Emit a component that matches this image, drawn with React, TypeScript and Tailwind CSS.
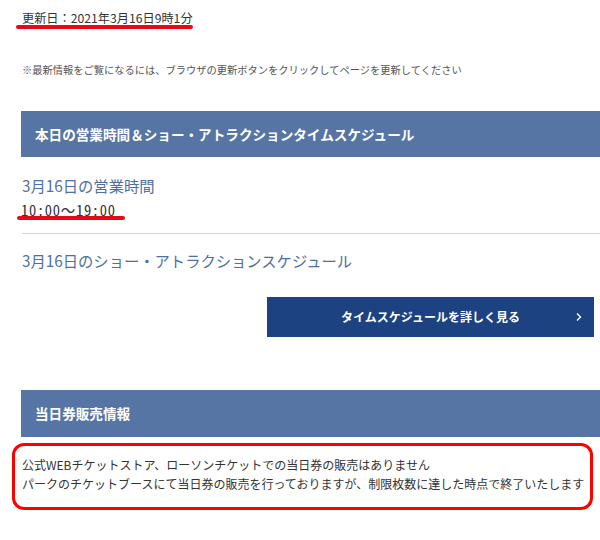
export default function App() {
  return (
    <div className="min-h-[540px] w-[600px] overflow-hidden bg-white pt-[9px] pl-[21px] font-['Noto_Sans_CJK_JP','Noto_Sans',sans-serif] text-[#333]">
      {/* Updated date */}
      <div className="relative ml-[1px] w-fit text-[12.2px] leading-[18px]">
        更新日：2021年3月16日9時1分
        <span className="absolute -left-[6px] top-[16px] h-[4px] w-[177px] rounded-full bg-[#e8081b]" />
      </div>

      <p className="mt-[35px] pl-[1px] text-[10.25px] leading-[16px] text-[#555]">
        ※最新情報をご覧になるには、ブラウザの更新ボタンをクリックしてページを更新してください
      </p>

      {/* Today's hours */}
      <div className="mt-[33px] flex h-[46px] items-center bg-[#5675a5] pl-[14px]">
        <h2 className="text-[13.6px] font-bold text-white">
          本日の営業時間＆ショー・アトラクションタイムスケジュール
        </h2>
      </div>

      <h3 className="mt-[17px] pl-[1px] text-[15.3px] leading-[22px] text-[#4f6fa3]">
        3月16日の営業時間
      </h3>
      <div className="relative mt-[4px] w-fit font-['Noto_Sans_Mono_CJK_JP','DejaVu_Sans_Mono',monospace] text-[14.5px] leading-[20px] tracking-[0.7px] text-[#333]">
        10:00〜19:00
        <span className="absolute -left-[4px] top-[16px] h-[4px] w-[108px] rounded-full bg-[#e8081b]" />
      </div>

      <div className="mt-[13px] ml-[1px] border-t border-[#d4d4d4]" />

      <h3 className="mt-[15px] pl-[1px] text-[15.3px] leading-[22px] text-[#4f6fa3]">
        3月16日のショー・アトラクションスケジュール
      </h3>

      <div className="mt-[26px] flex justify-end pr-[6px]">
        <button
          type="button"
          className="relative flex h-[40px] w-[327px] items-center justify-center bg-[#1c4282] text-[12px] font-bold text-white"
        >
          タイムスケジュールを詳しく見る
          <svg
            className="absolute right-[12px] top-1/2 -translate-y-1/2"
            width="6"
            height="10"
            viewBox="0 0 6 10"
            fill="none"
          >
            <polyline
              points="1,1.5 4.5,5 1,8.5"
              stroke="white"
              strokeWidth="1.4"
            />
          </svg>
        </button>
      </div>

      {/* Same-day tickets */}
      <div className="mt-[53px] flex h-[47px] items-center bg-[#5675a5] pl-[14px]">
        <h2 className="text-[13.6px] font-bold text-white">当日券販売情報</h2>
      </div>

      <div className="mt-[6px] -ml-[9px] w-[581px] rounded-[12px] border-[3px] border-[#f00] pt-[9px] pb-[14px] pl-[7px] text-[12px] leading-[19px] text-[#333]">
        <p>公式WEBチケットストア、ローソンチケットでの当日券の販売はありません</p>
        <p>
          パークのチケットブースにて当日券の販売を行っておりますが、制限枚数に達した時点で終了いたします
        </p>
      </div>
    </div>
  );
}
